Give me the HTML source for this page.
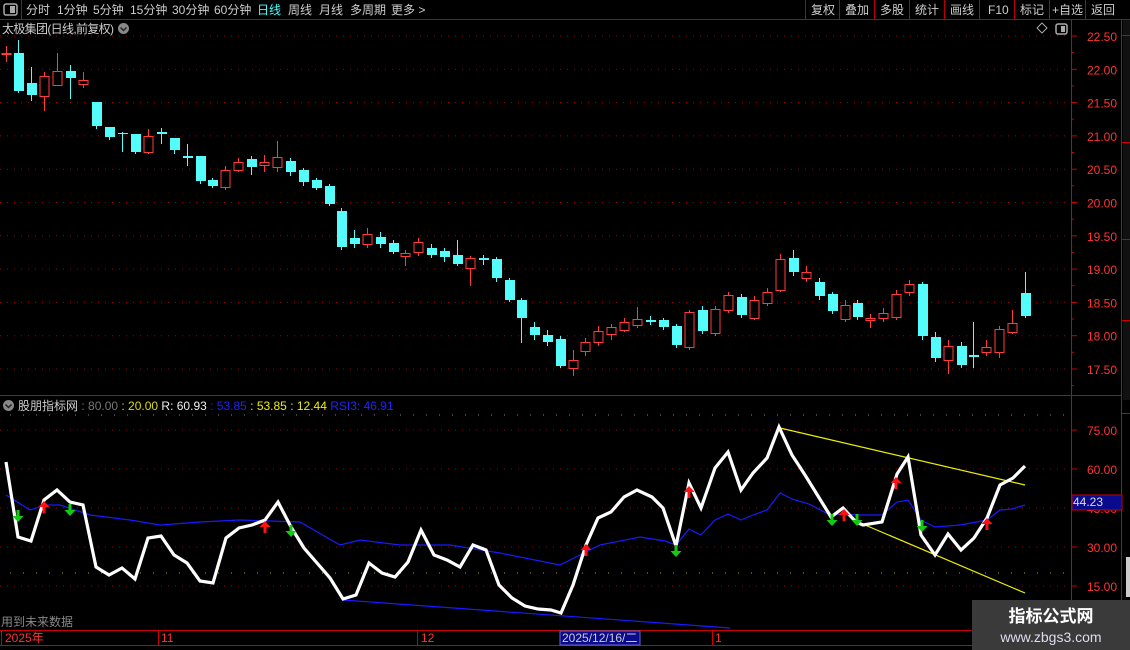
<!DOCTYPE html>
<html><head><meta charset="utf-8"><style>
body{margin:0;background:#000;width:1130px;height:650px;overflow:hidden;font-family:"Liberation Sans","Noto Sans CJK SC",sans-serif;}
svg{position:absolute;left:0;top:0}
.t{font-family:"Liberation Sans","Noto Sans CJK SC",sans-serif;font-size:12px}
</style></head><body>
<svg id="s" width="1130" height="650" xmlns="http://www.w3.org/2000/svg">
<rect width="1130" height="650" fill="#000"/>
<line x1="0" y1="19.5" x2="1130" y2="19.5" stroke="#b00" />
<line x1="21.5" y1="0" x2="21.5" y2="19" stroke="#b00"/>
<rect x="4" y="4" width="13" height="11" rx="2" fill="none" stroke="#aaa" stroke-width="1.5"/><rect x="10" y="6" width="5" height="7" fill="#aaa"/>
<g class="t" fill="#ccc" font-size="12.5">
<text x="26" y="14">分时</text><text x="57" y="14">1分钟</text><text x="93" y="14">5分钟</text><text x="130" y="14">15分钟</text><text x="172" y="14">30分钟</text><text x="214" y="14">60分钟</text>
<text x="257" y="14" fill="#4ff">日线</text><text x="288" y="14">周线</text><text x="319" y="14">月线</text><text x="350" y="14">多周期</text><text x="391" y="14">更多 &gt;</text>
<text x="811" y="14">复权</text><text x="845" y="14">叠加</text><text x="880" y="14">多股</text><text x="915" y="14">统计</text><text x="950" y="14">画线</text><text x="988" y="14">F10</text><text x="1020" y="14">标记</text><text x="1052" y="14">+自选</text><text x="1091" y="14">返回</text>
</g>
<g stroke="#b00"><line x1="805.5" y1="0" x2="805.5" y2="19"/><line x1="839.5" y1="0" x2="839.5" y2="19"/><line x1="874.5" y1="0" x2="874.5" y2="19"/><line x1="909.5" y1="0" x2="909.5" y2="19"/><line x1="944.5" y1="0" x2="944.5" y2="19"/><line x1="979.5" y1="0" x2="979.5" y2="19"/><line x1="1014.5" y1="0" x2="1014.5" y2="19"/><line x1="1049.5" y1="0" x2="1049.5" y2="19"/><line x1="1085.5" y1="0" x2="1085.5" y2="19"/></g>
<text class="t" x="2" y="33" fill="#ccc" font-size="13" textLength="112">太极集团(日线,前复权)</text>
<circle cx="123.5" cy="28.5" r="5.5" fill="#888"/><path d="M120.5 27.5l3 3 3-3" stroke="#222" fill="none" stroke-width="1.5"/>
<path d="M1042 23l5 5-5 5-5-5z" fill="none" stroke="#aaa"/>
<rect x="1056" y="24" width="11" height="10" rx="2" fill="none" stroke="#aaa" stroke-width="1.5"/><rect x="1061" y="26" width="4" height="6" fill="#aaa"/>
<line x1="1071.5" y1="20" x2="1071.5" y2="630" stroke="#c00"/>
<line x1="1121.5" y1="20" x2="1121.5" y2="650" stroke="#c00"/>
<line x1="0" y1="395.5" x2="1121" y2="395.5" stroke="#c00"/>
<g id="main"></g>
<g id="ind"></g>
<rect x="1072" y="495" width="50" height="15" fill="#0a0a8c" stroke="#c00"/>
<text class="t" x="1073" y="506" fill="#ddd">44.23</text>
<circle cx="8.5" cy="405.5" r="5.5" fill="#888"/><path d="M5.5 404.5l3 3 3-3" stroke="#222" fill="none" stroke-width="1.5"/>
<text class="t" x="18" y="410"><tspan fill="#ccc">股朋指标网</tspan><tspan fill="#777"> : 80.00</tspan><tspan fill="#dd0"> : 20.00 </tspan><tspan fill="#eee">R: 60.93</tspan><tspan fill="#22f"> : 53.85</tspan><tspan fill="#ee0"> : 53.85 : 12.44 </tspan><tspan fill="#22f">RSI3: 46.91</tspan></text>
<text class="t" x="1" y="626" fill="#888">用到未来数据</text>
<line x1="0" y1="630.5" x2="1071" y2="630.5" stroke="#c00"/>
<line x1="0" y1="645.5" x2="1130" y2="645.5" stroke="#c00"/>
<g stroke="#c00"><line x1="158.5" y1="630" x2="158.5" y2="645"/><line x1="417.5" y1="630" x2="417.5" y2="645"/><line x1="712.5" y1="630" x2="712.5" y2="645"/><line x1="1.5" y1="630" x2="1.5" y2="645"/></g>
<rect x="560" y="631" width="80" height="14" fill="#0a0a8c" stroke="#66c"/>
<g class="t" font-size="12"><text x="5" y="642" fill="#f33">2025年</text><text x="161" y="642" fill="#f33">11</text><text x="421" y="642" fill="#f33">12</text><text x="562" y="642" fill="#ccc">2025/12/16/二</text><text x="715" y="642" fill="#f33">1</text></g>
<rect x="972" y="600" width="158" height="50" fill="#3a3a3a"/>
<text x="1051" y="622" text-anchor="middle" font-family="Liberation Sans,Noto Sans CJK SC,sans-serif" font-weight="bold" font-size="17" fill="#fff">指标公式网</text>
<text x="1051" y="642" text-anchor="middle" font-family="Liberation Sans,sans-serif" font-size="14" fill="#dde">www.zbgs3.com</text>
<rect x="1123" y="20" width="7" height="380" fill="#111"/>
<g stroke="#c00"><line x1="1122" y1="35.5" x2="1130" y2="35.5"/><line x1="1122" y1="142.5" x2="1130" y2="142.5"/><line x1="1122" y1="239.5" x2="1130" y2="239.5"/><line x1="1122" y1="320.5" x2="1130" y2="320.5"/><line x1="1122" y1="413.5" x2="1130" y2="413.5"/></g>
<rect x="1126" y="557" width="4" height="40" fill="#ccc"/>
</svg>
<script>
const NS="http://www.w3.org/2000/svg",s=document.getElementById('s');
const M=document.getElementById('main'),I=document.getElementById('ind');
function el(p,t,a,txt){const e=document.createElementNS(NS,t);for(const k in a)e.setAttribute(k,a[k]);if(txt)e.textContent=txt;p.appendChild(e);return e;}
for(let i=0;i<11;i++){const p=22.5-i*0.5,y=36+i*33.3;
 el(M,'line',{x1:0,y1:y,x2:1071,y2:y,stroke:'#a00','stroke-dasharray':'1 6'});
 el(M,'line',{x1:1071,y1:y,x2:1077,y2:y,stroke:'#c00'});
 el(M,'line',{x1:1071,y1:y+16.6,x2:1074,y2:y+16.6,stroke:'#c00'});
 el(M,'text',{x:1117,y:y+5,fill:'#f33','text-anchor':'end','font-size':12,'font-family':'Liberation Sans,sans-serif'},p.toFixed(2));}
const C=[[6,53,53,46,62,1],[18,53,91,40,93,0],[31,83,95,67,101,0],[44,76,96,72,111,1],[57,71,85,53,86,1],[70,71,78,65,99,0],[83,80,84,72,88,1],[96,102,126,102,129,0],[109,127,137,127,140,0],[122,133,134,132,152,0],[135,134,152,134,154,0],[148,136,152,129,154,1],[161,132,134,128,144,0],[174,138,150,138,154,0],[187,156,158,144,166,0],[200,156,181,156,184,0],[212,180,186,178,188,0],[225,170,187,166,190,1],[238,162,170,158,172,1],[251,159,167,156,175,0],[264,162,165,155,172,1],[277,157,167,141,172,1],[290,161,172,158,176,0],[303,170,182,168,186,0],[316,180,188,178,190,0],[329,186,204,184,206,0],[341,211,247,208,250,0],[354,238,244,230,248,0],[367,234,244,228,248,1],[380,237,244,232,248,0],[393,243,252,240,254,0],[405,253,256,250,266,1],[418,242,252,238,256,1],[431,248,255,244,258,0],[444,251,257,248,262,0],[457,255,264,240,266,0],[470,258,268,256,286,1],[483,258,260,255,265,0],[496,259,278,257,282,0],[509,280,300,278,302,0],[521,300,318,298,343,0],[534,327,335,322,340,0],[547,335,342,330,346,0],[560,339,366,336,368,0],[573,360,368,350,376,1],[585,342,351,338,356,1],[598,331,342,326,346,1],[611,327,334,324,340,1],[624,322,330,318,332,1],[637,319,325,307,328,1],[650,320,322,316,325,0],[663,320,327,318,330,0],[676,326,345,324,348,0],[689,312,347,310,350,1],[702,310,331,306,334,0],[715,309,333,306,336,1],[728,295,310,292,313,1],[741,297,315,294,318,0],[754,300,318,296,320,1],[767,292,303,288,306,1],[780,259,290,254,292,1],[793,258,272,250,276,0],[806,272,278,266,282,1],[819,282,296,278,300,0],[832,294,311,292,314,0],[845,305,319,300,322,1],[857,303,317,300,320,0],[870,318,320,314,328,1],[883,313,318,308,322,1],[896,294,317,290,320,1],[909,284,292,280,296,1],[922,284,336,282,340,0],[935,337,358,332,362,0],[948,346,360,340,374,1],[961,346,365,342,368,0],[973,355,357,322,368,0],[986,347,352,340,356,1],[999,329,352,326,358,1],[1012,323,332,310,334,1],[1025,293,316,272,318,0]];
C.forEach(c=>{const col=c[5]?'#ff3c3c':'#54fcfc';
 el(M,'line',{x1:c[0]+.5,y1:c[3],x2:c[0]+.5,y2:c[4],stroke:col});
 const h=Math.max(1,c[2]-c[1]);
 if(c[5]) el(M,'rect',{x:c[0]-4,y:c[1]+.5,width:9,height:h,fill:'#000',stroke:col});
 else el(M,'rect',{x:c[0]-4,y:c[1],width:10,height:h,fill:col});});
[75,60,45,30,15].forEach(v=>{const y=430+(75-v)*2.6;
 el(I,'line',{x1:0,y1:y,x2:1071,y2:y,stroke:'#a00','stroke-dasharray':'1 6'});
 el(I,'line',{x1:1071,y1:y,x2:1077,y2:y,stroke:'#c00'});
 el(I,'text',{x:1117,y:y+5,fill:'#f33','text-anchor':'end','font-size':12,'font-family':'Liberation Sans,sans-serif'},v.toFixed(2));});
el(I,'line',{x1:10,y1:415,x2:1071,y2:415,stroke:'#888','stroke-dasharray':'1 12'});
el(I,'line',{x1:10,y1:573,x2:1071,y2:573,stroke:'#aa0','stroke-dasharray':'1 12'});
function pl(pts,col,w){el(I,'polyline',{points:pts.map(p=>p.join(',')).join(' '),fill:'none',stroke:col,'stroke-width':w,'stroke-linejoin':'miter'});}
pl([[6,495],[30,510],[45,505],[60,505],[90,515],[130,520],[160,525],[200,522],[240,520],[300,522],[340,545],[360,540],[400,545],[450,545],[500,553],[560,565],[600,545],[640,537],[665,541],[676,545],[689,529],[701,535],[715,520],[728,514],[741,520],[753,515],[767,510],[780,493],[792,499],[809,504],[830,515],[843,514],[858,515],[882,515],[897,502],[908,500],[921,520],[935,527],[960,525],[987,520],[1000,510],[1012,509],[1025,505]],'#1a1aff',1.2);
pl([[780,428],[1025,485]],'#ee0',1.2);pl([[858,522],[1025,593]],'#ee0',1.2);
pl([[343,600],[730,628]],'#1a1aff',1.2);
pl([[6,462],[18,537],[31,541],[44,500],[57,490],[70,502],[83,505],[96,567],[109,575],[122,568],[135,579],[148,538],[161,536],[174,555],[187,563],[200,581],[213,583],[226,538],[239,528],[252,525],[265,520],[278,502],[291,527],[304,548],[317,563],[330,578],[343,599],[356,595],[369,563],[382,573],[395,577],[408,562],[421,530],[434,555],[447,560],[460,567],[473,545],[486,550],[499,585],[512,598],[525,606],[538,609],[551,610],[561,613],[573,585],[586,545],[598,518],[611,512],[624,497],[637,490],[652,497],[663,508],[676,546],[689,483],[701,508],[715,468],[728,452],[741,490],[753,473],[767,458],[779,427],[792,455],[805,475],[818,496],[831,517],[843,508],[856,522],[863,525],[882,522],[897,474],[908,457],[921,535],[935,555],[948,534],[961,550],[974,538],[987,518],[1000,485],[1013,478],[1025,466]],'#fff',3.2);
function dn(x,y){el(I,'path',{d:`M${x-1.5} ${y-8}h3v6h4l-5.5 6-5.5-6h4z`,fill:'#1c1'});}
function up(x,y){el(I,'path',{d:`M${x-1.5} ${y+8}h3v-6h4l-5.5-6-5.5 6h4z`,fill:'#f11'});}
[[18,518],[70,512],[291,533],[676,553],[832,522],[857,522],[922,528]].forEach(p=>dn(p[0],p[1]));
[[44,505],[265,525],[586,548],[689,490],[844,513],[896,481],[987,522]].forEach(p=>up(p[0],p[1]));
</script>
</body></html>
